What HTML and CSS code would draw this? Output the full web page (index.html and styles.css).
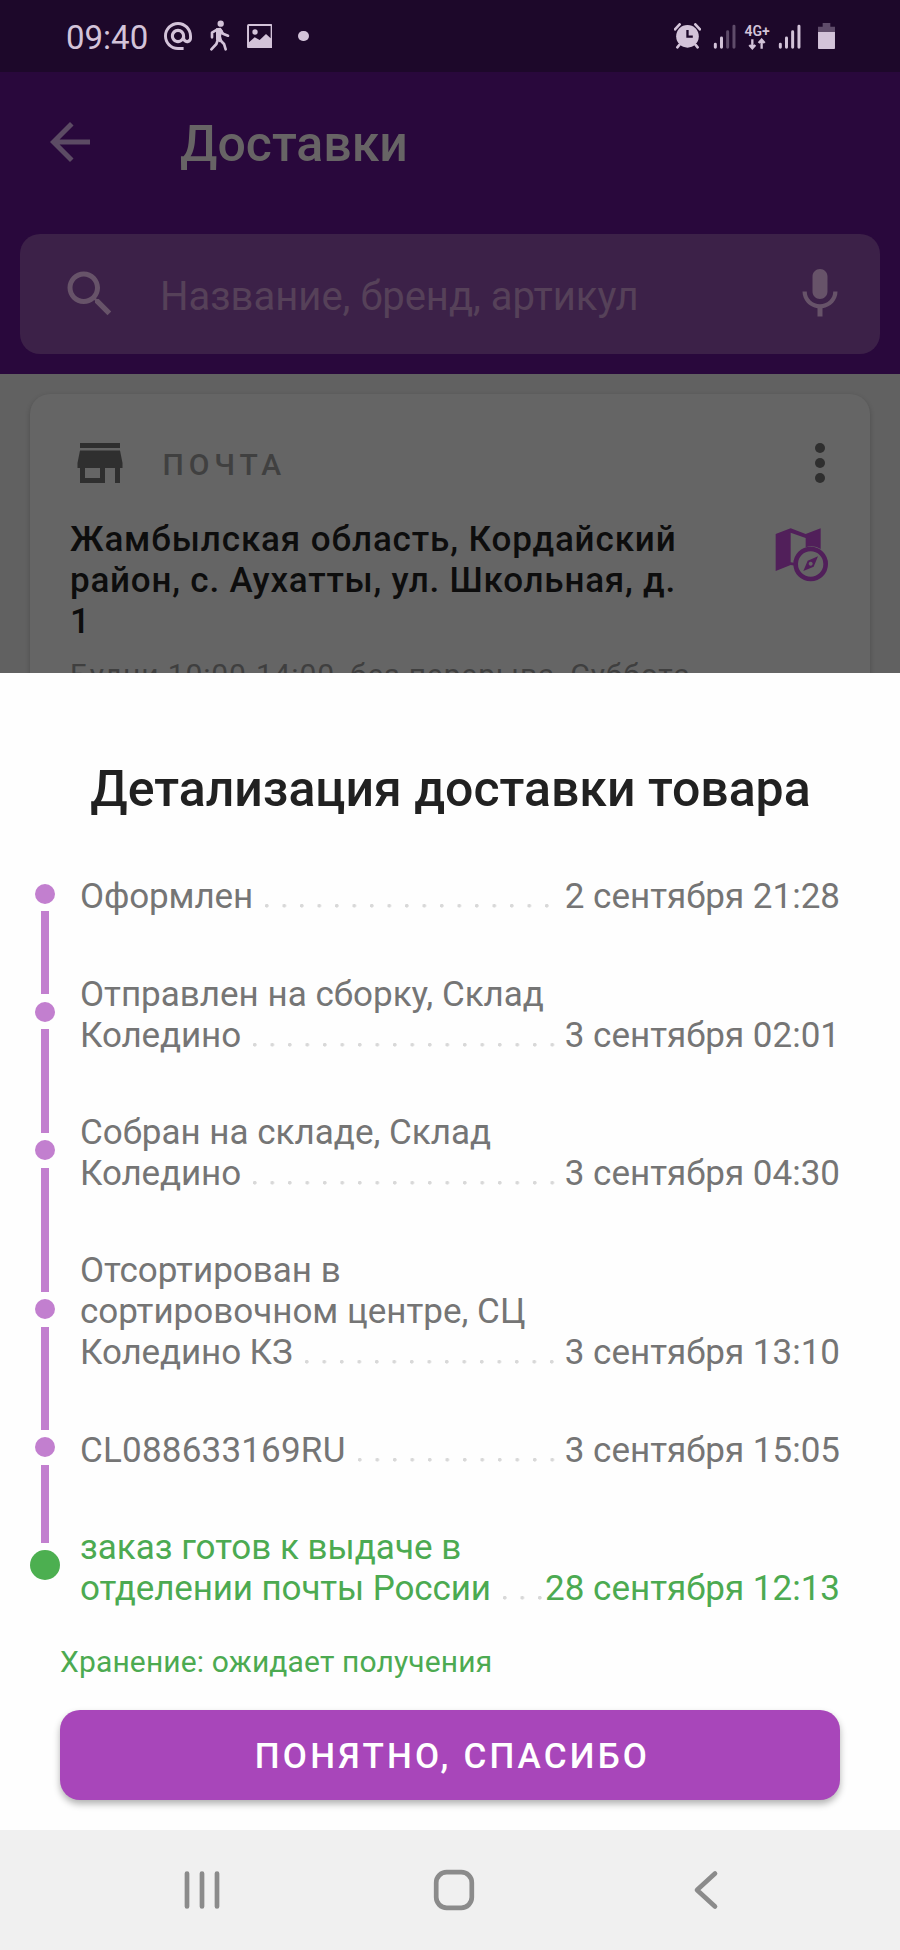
FILE: index.html
```html
<!DOCTYPE html>
<html lang="ru">
<head>
<meta charset="utf-8">
<title>Доставки</title>
<link rel="stylesheet" href="styles.css">
</head>
<body>
<div class="page">
  <div class="statusbar">
    <span class="clock">09:40</span>
    <svg class="ic-at" viewBox="2 2 20 20"><path d="M12 2C6.480 2 2 6.480 2 12s4.480 10 10 10h4v-2.100h-4c-4.300 0-7.900-3.600-7.900-7.900S7.700 4.100 12 4.100s7.900 3.600 7.900 7.900v1.430c0 .7-.6 1.370-1.400 1.370s-1.400-.67-1.400-1.370V12c0-2.800-2.300-5.100-5.100-5.100S6.900 9.200 6.900 12s2.300 5.100 5.100 5.100c1.380 0 2.640-.56 3.540-1.470.65.89 1.770 1.470 2.960 1.470 1.970 0 3.500-1.600 3.500-3.570V12c0-5.520-4.480-10-10-10zm0 12.900c-1.600 0-2.900-1.300-2.900-2.900s1.300-2.900 2.900-2.900 2.900 1.300 2.900 2.900-1.300 2.900-2.900 2.900z"/></svg>
    <svg class="ic-walk" viewBox="627 61 62 94"><circle cx="662" cy="72" r="9.500"/><path class="st" d="M636 113V99l15-9M684 108l-15-6-9-12M634 149l15-16 5-14M677 149l-5-16-14-14"/><path d="M648 86l14-2 7 10-6 15 4 16-8 3-11-8z"/></svg>
    <svg class="ic-image" viewBox="740 71 77 73"><path fill-rule="evenodd" d="M745 71h67q5 0 5 5v63q0 5-5 5h-67q-5 0-5-5V76q0-5 5-5zM746 77v49l17-15 15 8 19-18 14 13V77z"/><circle cx="764" cy="95" r="8"/></svg>
    <span class="dot"></span>
    <svg class="ic-alarm" viewBox="672 68 82 78"><path class="st" d="M675 87l14-15M750 87l-14-15M688 134l-6 7M737 134l6 7"/><circle cx="712.500" cy="108" r="34"/><path class="hand" d="M712.500 89v20h16"/></svg>
    <svg class="ic-signal first" viewBox="789 72 70 76"><path d="M796 133v9M814.500 114v28"/><path class="off" d="M833 95v47M852 79v63"/></svg>
    <span class="net"><span>4G+</span><svg class="ic-updown" viewBox="893 115 55 38"><path d="M906 119v26m-9-9l9 10 9-10M934 147v-26m-9 9l9-10 9 10"/></svg></span>
    <svg class="ic-signal" viewBox="789 72 70 76"><path d="M796 133v9M814.500 114v28M833 95v47M852 79v63"/></svg>
    <svg class="ic-battery" viewBox="1102 68 51 79"><path class="off" d="M1116 68h23v11h14v17h-51V79h14z"/><path d="M1102 95h51v47q0 5-5 5h-41q-5 0-5-5z"/></svg>
  </div>

  <div class="header">
    <div class="appbar">
      <svg class="icon" viewBox="0 0 24 24"><path d="M20 11H7.830l5.590-5.590L12 4l-8 8 8 8 1.410-1.410L7.830 13H20v-2z"/></svg>
      <h1>Доставки</h1>
    </div>
    <div class="search">
      <svg class="icon" viewBox="0 0 24 24"><path d="M15.500 14h-.79l-.28-.27C15.410 12.590 16 11.110 16 9.500 16 5.910 13.090 3 9.500 3S3 5.910 3 9.500 5.910 16 9.500 16c1.610 0 3.090-.59 4.230-1.570l.27.28v.79l5 4.990L20.490 19l-4.990-5zm-6 0C7.010 14 5 11.990 5 9.500S7.010 5 9.500 5 14 7.010 14 9.500 11.990 14 9.500 14z"/></svg>
      <span class="placeholder">Название, бренд, артикул</span>
      <svg class="icon" viewBox="0 0 24 24"><path d="M12 14c1.660 0 2.990-1.340 2.990-3L15 5c0-1.660-1.340-3-3-3S9 3.340 9 5v6c0 1.660 1.340 3 3 3zm5.300-3c0 3-2.540 5.100-5.300 5.100S6.700 14 6.700 11H5c0 3.410 2.720 6.230 6 6.720V21h2v-3.280c3.280-.48 6-3.300 6-6.720h-1.700z"/></svg>
    </div>
  </div>

  <div class="content">
    <div class="card">
      <div class="card-head">
        <svg class="icon" viewBox="0 0 24 24"><path d="M20 4H4v2h16V4zm1 10v-2l-1-5H4l-1 5v2h1v6h10v-6h4v6h2v-6h1zm-9 4H6v-4h6v4z"/></svg>
        <span class="kind">ПОЧТА</span>
        <svg class="icon" viewBox="0 0 24 24"><circle cx="12" cy="6" r="2"/><circle cx="12" cy="12" r="2"/><circle cx="12" cy="18" r="2"/></svg>
      </div>
      <div class="card-body">
        <div class="address">Жамбылская область, Кордайский<br><span class="tight">район, с. Аухатты, ул. Школьная, д.</span><br>1</div>
        <svg class="ic-map" viewBox="970 380 165 165"><path d="M975 401l45-17 45 17 45-17v62l-12-6q-18-5-33 1v-28l-45-16v89l20 3v8l-20-3-45 18z"/><circle class="ring" cx="1080" cy="491" r="45"/><path fill-rule="evenodd" d="M1102 468l-13 31-31 13 13-31zM1080 484a6 6 0 1 0 .1 0z"/></svg>
      </div>
      <div class="hours">Будни 10:00-14:00, без перерыва, Суббота</div>
    </div>
  </div>

  <div class="sheet">
    <h2>Детализация доставки товара</h2>
    <div class="steps">
      <div class="step first">
        <div class="rail"><i class="line"></i><i class="bullet"></i><i class="line"></i></div>
        <div class="text"><div class="last"><span class="label">Оформлен</span><i class="leader"></i><span>2 сентября 21:28</span></div></div>
      </div>
      <div class="step">
        <div class="rail"><i class="line"></i><i class="bullet"></i><i class="line"></i></div>
        <div class="text"><div>Отправлен на сборку, Склад</div><div class="last"><span class="label">Коледино</span><i class="leader"></i><span>3 сентября 02:01</span></div></div>
      </div>
      <div class="step">
        <div class="rail"><i class="line"></i><i class="bullet"></i><i class="line"></i></div>
        <div class="text"><div>Собран на складе, Склад</div><div class="last"><span class="label">Коледино</span><i class="leader"></i><span>3 сентября 04:30</span></div></div>
      </div>
      <div class="step">
        <div class="rail"><i class="line"></i><i class="bullet"></i><i class="line"></i></div>
        <div class="text"><div>Отсортирован в</div><div>сортировочном центре, СЦ</div><div class="last"><span class="label">Коледино КЗ</span><i class="leader"></i><span>3 сентября 13:10</span></div></div>
      </div>
      <div class="step">
        <div class="rail"><i class="line"></i><i class="bullet"></i><i class="line"></i></div>
        <div class="text"><div class="last"><span class="track">CL088633169RU</span><i class="leader"></i><span>3 сентября 15:05</span></div></div>
      </div>
      <div class="step ready">
        <div class="rail"><i class="line"></i><i class="bullet"></i><i class="line"></i></div>
        <div class="text"><div>заказ готов к выдаче в</div><div class="last"><span class="label">отделении почты России</span><i class="leader"></i><span>28 сентября 12:13</span></div></div>
      </div>
    </div>
    <div class="storage">Хранение: ожидает получения</div>
    <button class="ok">ПОНЯТНО, СПАСИБО</button>
  </div>

  <div class="navbar">
    <svg viewBox="0 0 48 48"><path d="M9 7.500v33M24 7.500v33M39 7.500v33"/></svg>
    <svg viewBox="0 0 48 48"><rect x="6.200" y="6.200" width="35.600" height="35.600" rx="10.500"/></svg>
    <svg viewBox="0 0 48 48"><path d="M33 7.500L15 24l18 16.500"/></svg>
  </div>
</div>
</body>
</html>
```

FILE: styles.css
```css
* { box-sizing: border-box; }
body { margin: 0; font-family: Roboto, "Liberation Sans", sans-serif; }
h1, h2 { margin: 0; font-weight: 500; }
svg { display: block; flex: none; }
.page { width: 900px; height: 1950px; display: flex; flex-direction: column; overflow: hidden; background: #fefefe; }
.icon { width: 60px; height: 60px; }

/* Status bar */
.statusbar { height: 72px; flex: none; display: flex; align-items: center; padding: 0 65px 0 66px; background: #1d082a; color: #d3c3d9; fill: #d3c3d9; }
.statusbar svg { stroke: none; }
.clock { font-size: 33px; line-height: 40px; width: 98px; padding-top: 3px; }
.ic-at { width: 28px; height: 28px; }
.ic-walk { width: 20.700px; height: 31.300px; margin-left: 17px; }
.statusbar .st { fill: none; stroke: #d3c3d9; stroke-width: 8; stroke-linecap: round; stroke-linejoin: round; }
.ic-image { width: 25.700px; height: 24.300px; margin-left: 17px; }
.dot { width: 10.600px; height: 10.600px; border-radius: 50%; background: #d3c3d9; margin: 0 auto 0 25.600px; }
.ic-alarm { width: 27.300px; height: 26px; }
.hand { fill: none; stroke: #1d082a; stroke-width: 7; }
.ic-signal { width: 23.300px; height: 25.300px; margin-top: 2px; fill: none; margin-right: 17px; }
.ic-signal.first { margin: 2px 7.500px 0 12px; }
.ic-signal path { stroke: #d3c3d9; stroke-width: 9; stroke-linecap: round; }
.statusbar .ic-signal .off { stroke: #5f4c6a; }
.net { width: 26px; margin-right: 7.500px; margin-top: 3px; display: flex; flex-direction: column; align-items: center; font-size: 14px; line-height: 14px; font-weight: 600; }
.ic-updown { width: 18.300px; height: 12.700px; fill: none; }
.ic-updown path { stroke: #d3c3d9; stroke-width: 7; }
.ic-battery { width: 17px; height: 26.300px; }
.ic-battery .off { fill: #5f4c6a; }

/* App header */
.header { height: 302px; flex: none; background: #29083c; padding: 0 20px; }
.appbar { height: 140px; display: flex; align-items: center; padding-left: 20px; gap: 80px; fill: #5c4b64; }
.appbar h1 { font-size: 50px; line-height: 59px; padding-top: 4px; color: #676465; }
.search { height: 120px; margin-top: 22px; border-radius: 20px; background: #3c2148; display: flex; align-items: center; padding: 0 30px 0 40px; fill: #675369; }
.placeholder { flex: 1; margin-left: 40px; padding-top: 4px; font-size: 40px; line-height: 47px; color: #564159; }

/* Pickup point card */
.content { height: 298.500px; flex: none; overflow: hidden; background: #616161; padding: 20px 30px 0; }
.card { height: 400px; border-radius: 20px; background: #656565; box-shadow: 0 2px 5px rgba(0,0,0,.22); padding: 39px 20px 0 40px; }
.card-head { display: flex; align-items: center; fill: #2f2f2f; }
.kind { flex: 1; margin-left: 32.500px; padding-top: 3px; font-size: 30px; line-height: 35px; font-weight: 500; letter-spacing: 4.900px; color: #404040; }
.card-body { display: flex; justify-content: space-between; padding: 25px 21px 0 0; }
.address { padding-top: 1px; font-size: 35px; line-height: 41px; font-weight: 500; letter-spacing: .87px; color: #0d0d0d; white-space: nowrap; }
.tight { letter-spacing: .78px; }
.ic-map { width: 55px; height: 55px; margin-top: 9px; fill: #511f5a; }
.ring { fill: none; stroke: #511f5a; stroke-width: 14; }
.hours { margin-top: 15px; font-size: 30px; line-height: 35px; letter-spacing: .87px; color: #3f3f3f; white-space: nowrap; }

/* Bottom sheet */
.sheet { height: 1157.500px; flex: none; padding: 87px 60px 0 30px; background: #fefefe; }
.sheet h2 { margin-left: 31px; font-size: 50px; line-height: 59px; text-align: center; color: #212121; white-space: nowrap; }
.steps { margin-top: 26.700px; }
.step { display: flex; }
.rail { width: 30px; margin-right: 20px; display: flex; flex-direction: column; align-items: center; gap: 7.500px; }
.line { width: 7.500px; flex: 1 1 0; background: #c27fcf; }
.bullet { width: 20px; height: 20px; border-radius: 50%; background: #c27fcf; }
.first .line:first-child, .ready .line:last-child { visibility: hidden; }
.ready .bullet { width: 30px; height: 30px; background: #4caf50; }
.text { flex: 1; padding: 31px 0 25.400px; font-size: 35px; line-height: 41px; color: #757575; white-space: nowrap; }
.ready .text { color: #4caa51; }
.last { display: flex; align-items: stretch; }
.label { letter-spacing: -.12px; }
.track { letter-spacing: .2px; }
.leader { flex: 1; min-width: 0; margin: 0 3px 0 12px; background: radial-gradient(circle at 1.750px 1.750px, #d8d8d8 1.500px, transparent 2.200px) 0 28px / 17.500px 4px repeat-x; }
.storage { margin: 9.700px 0 0 30px; font-size: 30px; line-height: 35px; letter-spacing: .14px; color: #4caa51; }
.ok { display: block; width: 780px; height: 90px; margin: 30.500px 0 0 30px; padding: 3px 0 0 5px; border: 0; border-radius: 20px; background: #a846ba; box-shadow: 0 4px 7px rgba(0,0,0,.3); color: #fff; font: 500 35px/41px Roboto, "Liberation Sans", sans-serif; letter-spacing: 3.200px; }

/* System navigation */
.navbar { flex: 1; background: #f0f0f0; display: flex; align-items: center; justify-content: space-between; padding: 0 170px 0 177.500px; }
.navbar svg { width: 48px; height: 48px; fill: none; stroke: #8b8b8b; stroke-width: 4.700; stroke-linecap: round; stroke-linejoin: round; }
```
